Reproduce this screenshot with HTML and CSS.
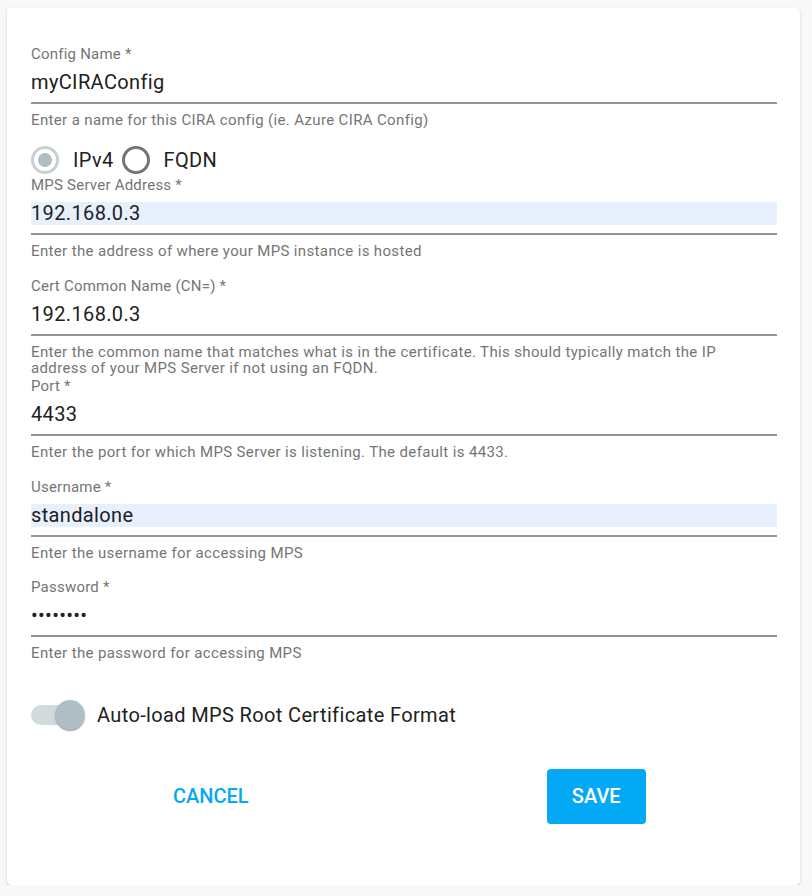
FILE: index.html
```html
<!DOCTYPE html>
<html lang="en">
<head>
<meta charset="utf-8">
<title>CIRA Config</title>
<link rel="stylesheet" href="styles.css">
</head>
<body>
<div class="card">
  <div class="field">
    <div class="label">Config Name *</div>
    <div class="input"><div class="value">myCIRAConfig</div></div>
    <div class="hint">Enter a name for this CIRA config (ie. Azure CIRA Config)</div>
  </div>

  <div class="radio-row">
    <span class="radio radio-checked"><span class="dot"></span></span>
    <span class="radio-label">IPv4</span>
    <span class="radio radio-empty"></span>
    <span class="radio-label">FQDN</span>
  </div>

  <div class="field spaced">
    <div class="label">MPS Server Address *</div>
    <div class="input"><div class="value autofill">192.168.0.3</div></div>
    <div class="hint">Enter the address of where your MPS instance is hosted</div>
  </div>

  <div class="field spaced">
    <div class="label">Cert Common Name (CN=) *</div>
    <div class="input"><div class="value">192.168.0.3</div></div>
    <div class="hint">Enter the common name that matches what is in the certificate. This should typically match the IP address of your MPS Server if not using an FQDN.</div>
  </div>

  <div class="field spaced">
    <div class="label">Port *</div>
    <div class="input"><div class="value">4433</div></div>
    <div class="hint">Enter the port for which MPS Server is listening. The default is 4433.</div>
  </div>

  <div class="field spaced">
    <div class="label">Username *</div>
    <div class="input"><div class="value autofill">standalone</div></div>
    <div class="hint">Enter the username for accessing MPS</div>
  </div>

  <div class="field spaced">
    <div class="label">Password *</div>
    <div class="input"><div class="value password">&bull;&bull;&bull;&bull;&bull;&bull;&bull;&bull;</div></div>
    <div class="hint">Enter the password for accessing MPS</div>
  </div>

  <div class="toggle-row">
    <span class="toggle"><span class="track"></span><span class="thumb"></span></span>
    <span class="toggle-label">Auto-load MPS Root Certificate Format</span>
  </div>

  <div class="actions">
    <div class="cell"><button class="btn btn-text" type="button">CANCEL</button></div>
    <div class="cell"><button class="btn btn-primary" type="button">SAVE</button></div>
  </div>
</div>
</body>
</html>
```

FILE: styles.css
```css
html, body {
  margin: 0;
  padding: 0;
  background: #f8f8f8;
  font-family: Roboto, "Liberation Sans", Arial, sans-serif;
}

body {
  padding-top: 8px;
}

.card {
  box-sizing: border-box;
  margin-left: 7px;
  width: 793px;
  height: 877px;
  background: #ffffff;
  border-radius: 4px;
  box-shadow: 0 2px 1px -1px rgba(0, 0, 0, 0.2), 0 1px 1px 0 rgba(0, 0, 0, 0.14), 0 1px 3px 0 rgba(0, 0, 0, 0.12);
  padding: 38px 23px 0 24px;
  display: flex;
  flex-direction: column;
  letter-spacing: 0.0225em;
}

.field {
  display: flex;
  flex-direction: column;
}

.field.spaced {
  margin-bottom: 18px;
}

.label {
  font-size: 15px;
  line-height: 16px;
  color: #757575;
  white-space: nowrap;
  letter-spacing: 0.015em;
}

.input {
  padding: 9px 0 8px;
  border-bottom: 2px solid #949494;
}

.value {
  font-size: 20px;
  line-height: 23px;
  height: 23px;
  color: #212121;
}

.value.autofill {
  background: #e8f0fe;
}

.value.password {
  color: #202020;
  letter-spacing: 0.3px;
}

.hint {
  margin-top: 8px;
  padding-right: 14px;
  font-size: 15px;
  line-height: 16.6px;
  height: 16.4px;
  color: #757575;
}

.radio-row {
  display: flex;
  align-items: center;
  height: 30px;
  margin-top: 17px;
  margin-bottom: 2px;
}

.radio {
  box-sizing: border-box;
  width: 28px;
  height: 28px;
  border-radius: 50%;
  display: flex;
  align-items: center;
  justify-content: center;
  flex: none;
}

.radio-checked {
  border: 3px solid #c9cfd2;
}

.radio-checked .dot {
  width: 14px;
  height: 14px;
  border-radius: 50%;
  background: #b0bec5;
}

.radio-empty {
  border: 3px solid #757575;
}

.radio-label {
  font-size: 20px;
  line-height: 23px;
  color: #212121;
  margin-left: 14px;
  margin-right: 8px;
}

.toggle-row {
  display: flex;
  align-items: center;
  height: 32px;
  margin-top: 20px;
}

.toggle {
  position: relative;
  width: 55px;
  height: 32px;
  flex: none;
}

.track {
  position: absolute;
  left: 0;
  top: 6px;
  width: 44px;
  height: 20px;
  border-radius: 10px;
  background: #d3dadd;
}

.thumb {
  position: absolute;
  left: 24px;
  top: 1px;
  width: 30px;
  height: 30px;
  border-radius: 50%;
  background: #b0bec5;
  box-shadow: 0 2px 1px -1px rgba(0, 0, 0, 0.2), 0 1px 1px 0 rgba(0, 0, 0, 0.14), 0 1px 3px 0 rgba(0, 0, 0, 0.12);
}

.toggle-label {
  margin-left: 11px;
  font-size: 20px;
  line-height: 23px;
  color: #212121;
}

.actions {
  display: grid;
  grid-template-columns: 1fr 1fr;
  align-items: center;
  justify-items: center;
  margin: 38px -12px 0 -13px;
}

.btn {
  font-family: Roboto, "Liberation Sans", Arial, sans-serif;
  font-size: 20px;
  font-weight: 500;
  line-height: 23px;
  letter-spacing: 0;
  border: none;
  border-radius: 4px;
  height: 55px;
  padding: 0 24px;
  cursor: pointer;
}

.btn-text {
  background: transparent;
  color: #03a9f4;
}

.btn-primary {
  background: #03a9f4;
  color: #ffffff;
  width: 99px;
  padding: 0;
}
```
